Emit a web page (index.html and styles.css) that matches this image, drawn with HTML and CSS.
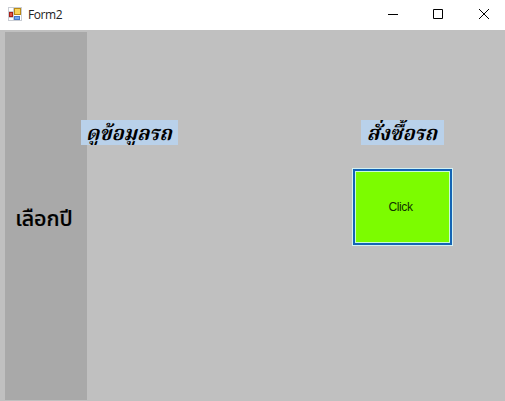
FILE: index.html
```html
<!DOCTYPE html>
<html lang="th">
<head>
<meta charset="utf-8">
<title>Form2</title>
<link rel="stylesheet" href="styles.css">
</head>
<body>
<div class="window">
  <header class="titlebar">
    <svg class="app-icon" width="14" height="14" viewBox="0 0 14 14">
      <rect x=".5" y=".5" width="13" height="13" fill="#fff" stroke="#c9cdd4"/>
      <path d="M5.500 0v14M0 4.500h6M0 10.500h6" stroke="#c9cdd4"/>
      <rect x="6.500" y="1.500" width="6" height="6" fill="#f8d35a" stroke="#b98a16"/>
      <rect x="1.500" y="5.500" width="3" height="4" fill="#e05642" stroke="#a51f18"/>
      <rect x="6.500" y="9.500" width="5" height="3" fill="#70a5ef" stroke="#4779c8"/>
    </svg>
    <span class="title">Form2</span>
    <svg class="control" viewBox="0 0 45 30"><path d="M17 14.500h10"/></svg>
    <svg class="control" viewBox="0 0 45 30"><path d="M17.500 9.500h9v9h-9z"/></svg>
    <svg class="control" viewBox="0 0 45 30"><path d="M18 9l10 10M28 9l-10 10"/></svg>
  </header>
  <main class="form">
    <aside class="panel"><span class="year">เลือกปี</span></aside>
    <section class="view"><div class="label label-view"><span class="script">ดูข้อมูลรถ</span></div></section>
    <section class="order">
      <div class="label label-order"><span class="script">สั่งซื้อรถ</span></div>
      <button class="click"><span>Click</span></button>
    </section>
  </main>
</div>
</body>
</html>
```

FILE: styles.css
```css
* { box-sizing: border-box; }
body { margin: 0; font-family: "Open Sans", "Noto Sans Thai", sans-serif; color: #000; }
.window { width: 505px; height: 401px; display: flex; flex-direction: column; overflow: hidden; background: #c0c0c0; }
.titlebar { height: 30px; display: flex; align-items: center; padding-left: 8px; background: #fff; }
.app-icon { margin-top: -2px; }
.title { margin: 0 auto 0 6px; font-size: 12px; letter-spacing: -.4px; line-height: 16px; color: #222; }
.control { flex: none; width: 45px; height: 30px; fill: none; stroke: #000; stroke-width: 1; }
.control:last-child { margin-right: -1px; }
.form { flex: 1; display: flex; padding: 2px 0 1px 5px; }
.panel { width: 82px; display: flex; align-items: center; justify-content: center; padding: 6px 4px 0 0; background: #a9a9a9; }
.year { font-family: "Noto Sans Thai", "Open Sans", sans-serif; font-size: 21.5px; font-weight: 500; white-space: nowrap; -webkit-text-stroke: .2px #000; }
.view { width: 265px; padding-top: 88px; }
.order { padding-top: 88px; }
.label { height: 25px; display: flex; align-items: center; justify-content: center; overflow: hidden; background: #b9d1ea; font-size: 20px; font-weight: 700; font-style: italic; line-height: 25px; white-space: nowrap; }
.label-view { width: 97px; margin-left: -6px; padding: 5px 1px 0 0; }
.label-order { width: 83px; margin-left: 9px; padding: 5px 1px 0 0; }
.script { font-family: "Noto Serif Thai", "Norasi", "Liberation Serif", serif; }
.click { display: flex; align-items: center; justify-content: center; width: 101px; height: 78px; margin-top: 23px; padding: 0 4px 0 0; border: 1px solid #d2f2f4; background: #7cfc00; box-shadow: inset 0 0 0 2px #1464b4, inset 0 0 0 3px #c8fbd8; font: 12px "Liberation Sans", sans-serif; letter-spacing: -.4px; color: #103000; }
```
